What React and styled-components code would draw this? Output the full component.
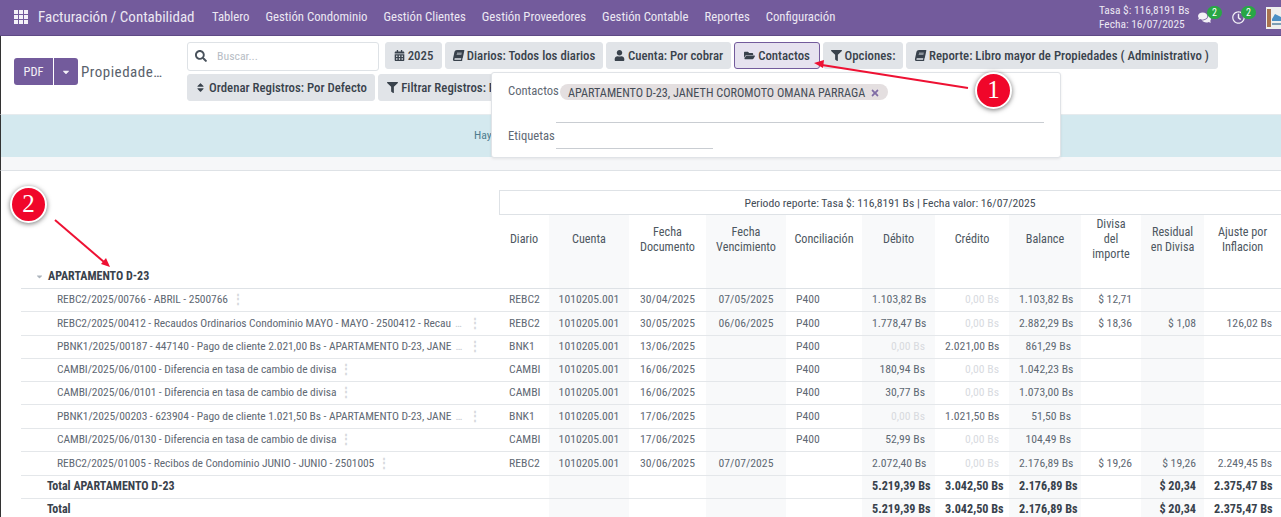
import React from "react";
import styled, { createGlobalStyle } from "styled-components";
import { FaSearch, FaCalendarAlt, FaBook, FaUser, FaFolderOpen, FaFilter, FaSort, FaComments, FaRegClock, FaCaretDown, FaTimes } from "react-icons/fa";

const Global = createGlobalStyle`
  html, body { margin: 0; padding: 0; height: 517px; overflow: hidden; background: #fff; }
  body { font-family: Roboto, "Open Sans", sans-serif; font-stretch: 75%; font-size: 11.7px; color: #5f6974; }
  button { font-stretch: 75%; }
  * { box-sizing: border-box; }
`;
const Page = styled.div`
  position: relative; width: 1281px; height: 517px; overflow: hidden; display: flex; flex-direction: column;
`;
const Navbar = styled.header`
  height: 36px; flex: none; background: #735b9c; color: #ece8f3; display: flex; align-items: center; padding: 0 0 2px 14px; border-bottom: 1px solid #5f4a85;
`;
const AppGrid = styled.span`
  width: 14px; height: 14px; display: grid; grid-template-columns: repeat(3, 4px); grid-auto-rows: 4px; gap: 1px; margin-right: 10px;
  i { background: #f4f2f8; display: block; }
`;
const Brand = styled.span`font-size: 15px; width: 174px; white-space: nowrap;`;
const NavItems = styled.nav`display: flex; gap: 16px; font-size: 12.75px; white-space: nowrap;`;
const NavRight = styled.div`margin-left: auto; display: flex; align-items: center; height: 100%; padding-top: 2px;`;
const Rate = styled.div`font-size: 11.4px; line-height: 13.5px; width: 99px; white-space: nowrap;`;
const IconSlot = styled.span`
  position: relative; width: 34px; height: 20px; display: flex; align-items: center; font-size: 13px; color: #f3f1f7;
`;
const Badge = styled.b`
  position: absolute; left: 9px; top: -2px; width: 15px; height: 13px; border-radius: 7px; background: #28a745; color: #fff; font-weight: 400; font-size: 10px; line-height: 13px; text-align: center;
`;
const Avatar = styled.svg`width: 15px; height: 22px; display: block;`;

const Control = styled.section`
  height: 78px; flex: none; display: flex; border-left: 1px solid #333; padding-left: 13px;
`;
const LeftBlock = styled.div`width: 173px; flex: none; display: flex; align-items: center; padding-bottom: 7px;`;
const Split = styled.div`display: flex; gap: 1px; height: 27px; border-radius: 3px; overflow: hidden; margin-right: 3px;`;
const PurpleBtn = styled.span`
  background: #735b9c; color: #f3f1f7; display: flex; align-items: center; justify-content: center; font-size: 12.4px; width: ${p => p.$w}px;
`;
const Title = styled.span`font-size: 15px; color: #59626c; letter-spacing: .5px; white-space: nowrap;`;
const Filters = styled.div`width: 1094px; padding-top: 6px; display: flex; flex-direction: column; gap: 3px;`;
const FilterRow = styled.div`display: flex; gap: 3px; align-items: flex-start;`;
const SearchBox = styled.div`
  width: 192px; height: 29px; margin-right: 3px; border: 1px solid #dee2e6; border-radius: 3px; display: flex; align-items: center; gap: 10px; padding: 0 0 2px 7px; color: #b7bdc5; font-size: 11.8px;
  svg { color: #49525c; font-size: 12px; }
`;
const FilterBtn = styled.button`
  width: ${p => p.$w}px; height: 27px; padding: 0; border-radius: 3px; border: 1px solid ${p => p.$active ? "#735b9c" : "#e1e4e8"};
  background: ${p => p.$active ? "#e6e2ef" : "#e1e4e8"}; color: #39424c; font-family: Roboto, sans-serif; font-weight: 500; font-size: 12.8px; display: flex; align-items: center; justify-content: center; gap: 3px; white-space: nowrap; overflow: hidden;
  svg { font-size: 11px; flex: none; }
`;
const SlantBook = styled(FaBook)`transform: skewX(-12deg);`;
const Alert = styled.div`
  height: 43px; flex: none; background: #d4e9ef; border-top: 1px solid #e6ebee; padding-left: 473px; padding-top: 13px; color: #4f7d8e; border-left: 1px solid #333;
`;
const Strip = styled.div`height: 14px; flex: none; background: #f6f7f9; border-bottom: 1px solid #dee2e6; border-left: 1px solid #333;`;
const Content = styled.main`flex: 1; padding: 19px 0 0 20px; border-left: 1px solid #333; overflow: hidden;`;

const Table = styled.table`
  table-layout: fixed; width: 1260px; border-collapse: collapse; font-size: 11.7px;
`;
const Col = styled.col`width: ${p => p.$w}px;`;
const PeriodCell = styled.th`
  height: 24px; border: 1px solid #dee2e6; font-weight: 400; font-size: 11.7px; color: #444d57; text-align: center; padding: 0;
`;
const HeadCell = styled.th`
  height: 74px; padding: 0 2px 24px; font-weight: 400; font-size: 12.2px; line-height: 15px; color: #4d5761; text-align: center; vertical-align: middle; background: ${p => p.$shade ? "#f8f9fa" : "#fff"};
  border-bottom: 1px solid #dee2e6;
`;
const GroupHead = styled.th`
  vertical-align: bottom; text-align: left; padding: 0 0 5px 14px; border-bottom: 1px solid #dee2e6; font-size: 12px; font-weight: 700; color: #39424c;
  svg { font-size: 9px; color: #adb5bd; margin-right: 4px; vertical-align: -1px; }
`;
const Row = styled.tr`height: ${p => p.$h}px;`;
const Cell = styled.td`
  padding: 0 ${p => p.$pr ?? 10}px 2px ${p => p.$pl ?? 10}px; white-space: nowrap; overflow: hidden; border-bottom: 1px solid #e4e7ea;
  text-align: ${p => p.$align || "left"}; background: ${p => p.$shade ? "#f8f9fa" : "#fff"};
  color: ${p => p.$muted ? "#d8dbdf" : p.$bold ? "#39424c" : "#5f6974"}; font-weight: ${p => p.$bold ? 700 : 400}; font-size: ${p => p.$bold ? 12.2 : 11.7}px;
`;
const LabelCell = styled(Cell)`padding-left: 36px; font-size: 11.5px; letter-spacing: -.07px;`;
const TotalLabel = styled(Cell)`padding-left: 26px; font-weight: 700; font-size: 12px; color: #39424c;`;
const More = styled.span`color: #c6cbd1; margin-left: 4px;`;
const Dots = styled.span`color: #d6d9dd; margin-left: ${p => p.$ml}px; font-weight: 700;`;

const Popover = styled.div`
  position: absolute; left: 491px; top: 72px; width: 570px; height: 86px; background: #fff; border: 1px solid #e0e3e7; border-radius: 3px; box-shadow: 0 1px 3px rgba(0,0,0,.08); padding: 9px 16px 0; display: grid; grid-template-columns: 48px 488px; grid-template-rows: 41px 26px;
`;
const FieldLabel = styled.label`padding-top: ${p => p.$pt}px; white-space: nowrap; font-size: 12.6px; color: #5f6974;`;
const FieldLine = styled.div`border-bottom: 1px solid #c9cdd2; position: relative; width: ${p => p.$w}px;`;
const Tag = styled.span`
  position: absolute; left: 4px; top: 2px; width: 328px; height: 16px; border-radius: 8px; background: #e4dfe0; color: #444d57; font-size: 12.2px; line-height: 16px; padding: 1px 0 0 8px; white-space: nowrap; display: flex; align-items: center; gap: 5px;
  svg { color: #7f6ca5; font-size: 10px; }
`;
const Marker = styled.div`
  position: absolute; left: ${p => p.$x}px; top: ${p => p.$y}px; width: 37px; height: 37px; border-radius: 50%; background: #f0062a; border: 2px solid #fff; box-shadow: 0 1px 5px rgba(0,0,0,.55); color: #fff; font: 25px/32px "Liberation Serif", serif; text-align: center;
`;
const ArrowLayer = styled.svg`position: absolute; left: 0; top: 0; pointer-events: none;`;

const cols = [478, 50, 80, 77, 80, 76, 73, 74, 72, 60, 63, 77];
const heads = [["Diario"], ["Cuenta"], ["Fecha", "Documento"], ["Fecha", "Vencimiento"], ["Conciliación"], ["Débito"], ["Crédito"], ["Balance"], ["Divisa", "del", "importe"], ["Residual", "en Divisa"], ["Ajuste por", "Inflacion"]];
const rowH = [23, 24, 23, 23, 23, 24, 23, 24];
const rows = [
  { t: "REBC2/2025/00766 - ABRIL - 2500766", j: "REBC2", d: "30/04/2025", v: "07/05/2025", c: "P400", db: "1.103,82 Bs", cr: "0,00 Bs", b: "1.103,82 Bs", di: "$ 12,71" },
  { t: "REBC2/2025/00412 - Recaudos Ordinarios Condominio MAYO - MAYO - 2500412 - Recau", more: 1, j: "REBC2", d: "30/05/2025", v: "06/06/2025", c: "P400", db: "1.778,47 Bs", cr: "0,00 Bs", b: "2.882,29 Bs", di: "$ 18,36", re: "$ 1,08", aj: "126,02 Bs" },
  { t: "PBNK1/2025/00187 - 447140 - Pago de cliente 2.021,00 Bs - APARTAMENTO D-23, JANE", more: 1, j: "BNK1", d: "13/06/2025", c: "P400", db: "0,00 Bs", cr: "2.021,00 Bs", b: "861,29 Bs" },
  { t: "CAMBI/2025/06/0100 - Diferencia en tasa de cambio de divisa", j: "CAMBI", d: "16/06/2025", c: "P400", db: "180,94 Bs", cr: "0,00 Bs", b: "1.042,23 Bs" },
  { t: "CAMBI/2025/06/0101 - Diferencia en tasa de cambio de divisa", j: "CAMBI", d: "16/06/2025", c: "P400", db: "30,77 Bs", cr: "0,00 Bs", b: "1.073,00 Bs" },
  { t: "PBNK1/2025/00203 - 623904 - Pago de cliente 1.021,50 Bs - APARTAMENTO D-23, JANE", more: 1, j: "BNK1", d: "17/06/2025", c: "P400", db: "0,00 Bs", cr: "1.021,50 Bs", b: "51,50 Bs" },
  { t: "CAMBI/2025/06/0130 - Diferencia en tasa de cambio de divisa", j: "CAMBI", d: "17/06/2025", c: "P400", db: "52,99 Bs", cr: "0,00 Bs", b: "104,49 Bs" },
  { t: "REBC2/2025/01005 - Recibos de Condominio JUNIO - JUNIO - 2501005", j: "REBC2", d: "30/06/2025", v: "07/07/2025", db: "2.072,40 Bs", cr: "0,00 Bs", b: "2.176,89 Bs", di: "$ 19,26", re: "$ 19,26", aj: "2.249,45 Bs" },
];
const isZero = v => v === "0,00 Bs";

const TotalRow = ({ label, h }) => (
  <Row $h={h}>
    <TotalLabel>{label}</TotalLabel>
    <Cell /><Cell $shade /><Cell /><Cell $shade /><Cell />
    <Cell $shade $align="right" $bold>5.219,39 Bs</Cell>
    <Cell $align="right" $bold>3.042,50 Bs</Cell>
    <Cell $shade $align="right" $bold>2.176,89 Bs</Cell>
    <Cell />
    <Cell $shade $align="right" $bold $pr={8}>$ 20,34</Cell>
    <Cell $align="right" $bold $pr={9}>2.375,47 Bs</Cell>
  </Row>
);

export default function App() {
  return (
    <Page>
      <Global />
      <Navbar>
        <AppGrid>{Array.from({ length: 9 }, (_, i) => <i key={i} />)}</AppGrid>
        <Brand>Facturación / Contabilidad</Brand>
        <NavItems>
          {["Tablero", "Gestión Condominio", "Gestión Clientes", "Gestión Proveedores", "Gestión Contable", "Reportes", "Configuración"].map(n => <span key={n}>{n}</span>)}
        </NavItems>
        <NavRight>
          <Rate>Tasa $: 116,8191 Bs<br />Fecha: 16/07/2025</Rate>
          <IconSlot><FaComments /><Badge>2</Badge></IconSlot>
          <IconSlot><FaRegClock /><Badge>2</Badge></IconSlot>
          <Avatar viewBox="0 0 15 22">
            <rect width="15" height="22" fill="#eef0ee" />
            <rect x="1" y="2" width="4" height="18" fill="#a9744f" />
            <path d="M6 12l3-5 6 3v4H6z" fill="#4a8fc4" />
            <rect x="6" y="16" width="9" height="2" fill="#7d9fb5" />
          </Avatar>
        </NavRight>
      </Navbar>
      <Control>
        <LeftBlock>
          <Split>
            <PurpleBtn $w={39}>PDF</PurpleBtn>
            <PurpleBtn $w={24}><FaCaretDown size={10} /></PurpleBtn>
          </Split>
          <Title>Propiedade…</Title>
        </LeftBlock>
        <Filters>
          <FilterRow>
            <SearchBox><FaSearch />Buscar...</SearchBox>
            <FilterBtn $w={57}><FaCalendarAlt />2025</FilterBtn>
            <FilterBtn $w={158}><SlantBook />Diarios: Todos los diarios</FilterBtn>
            <FilterBtn $w={125}><FaUser />Cuenta: Por cobrar</FilterBtn>
            <FilterBtn $w={86} $active><FaFolderOpen />Contactos</FilterBtn>
            <FilterBtn $w={80}><FaFilter />Opciones:</FilterBtn>
            <FilterBtn $w={312}><SlantBook />Reporte: Libro mayor de Propiedades ( Administrativo )</FilterBtn>
          </FilterRow>
          <FilterRow>
            <FilterBtn $w={188}><FaSort />Ordenar Registros: Por Defecto</FilterBtn>
            <FilterBtn $w={180}><FaFilter />Filtrar Registros: Por Defecto</FilterBtn>
          </FilterRow>
        </Filters>
      </Control>
      <Alert>Hay</Alert>
      <Strip />
      <Content>
        <Table>
          <colgroup>{cols.map((w, i) => <Col key={i} $w={w} />)}</colgroup>
          <thead>
            <tr>
              <th />
              <PeriodCell colSpan={11}>Periodo reporte: Tasa $: 116,8191 Bs | Fecha valor: 16/07/2025</PeriodCell>
            </tr>
            <tr>
              <GroupHead><FaCaretDown />APARTAMENTO D-23</GroupHead>
              {heads.map((h, i) => (
                <HeadCell key={i} $shade={i % 2 === 1}>
                  {h.map((l, k) => <React.Fragment key={k}>{k > 0 && <br />}{l}</React.Fragment>)}
                </HeadCell>
              ))}
            </tr>
          </thead>
          <tbody>
            {rows.map((r, i) => (
              <Row key={i} $h={rowH[i]}>
                <LabelCell>{r.t}{r.more && <More>…</More>}<Dots $ml={r.more ? 7 : 4}>⋮</Dots></LabelCell>
                <Cell>{r.j}</Cell>
                <Cell $shade $align="center" $pl={0} $pr={0}>1010205.001</Cell>
                <Cell $align="center" $pl={0} $pr={0}>{r.d}</Cell>
                <Cell $shade $align="center" $pl={0} $pr={0}>{r.v}</Cell>
                <Cell>{r.c}</Cell>
                <Cell $shade $align="right" $muted={isZero(r.db)}>{r.db}</Cell>
                <Cell $align="right" $muted={isZero(r.cr)}>{r.cr}</Cell>
                <Cell $shade $align="right">{r.b}</Cell>
                <Cell $align="right" $pr={9}>{r.di}</Cell>
                <Cell $shade $align="right" $pr={8}>{r.re}</Cell>
                <Cell $align="right" $pr={9}>{r.aj}</Cell>
              </Row>
            ))}
            <TotalRow label="Total APARTAMENTO D-23" h={23} />
            <TotalRow label="Total" h={23} />
          </tbody>
        </Table>
      </Content>

      <Popover>
        <FieldLabel $pt={1}>Contactos</FieldLabel>
        <FieldLine $w={488}><Tag>APARTAMENTO D-23, JANETH COROMOTO OMANA PARRAGA <FaTimes /></Tag></FieldLine>
        <FieldLabel $pt={5}>Etiquetas</FieldLabel>
        <FieldLine $w={157} />
      </Popover>

      <ArrowLayer width="1281" height="517" viewBox="0 0 1281 517">
        <line x1="968" y1="88" x2="822" y2="65" stroke="#ee1133" strokeWidth="2" />
        <path d="M814 63l10-3-1 8z" fill="#ee1133" />
        <line x1="55" y1="220" x2="104" y2="262" stroke="#ee1133" strokeWidth="2" />
        <path d="M110 267l-9-3 5-6z" fill="#ee1133" />
      </ArrowLayer>
      <Marker $x={975} $y={72}>1</Marker>
      <Marker $x={10} $y={186}>2</Marker>
    </Page>
  );
}
